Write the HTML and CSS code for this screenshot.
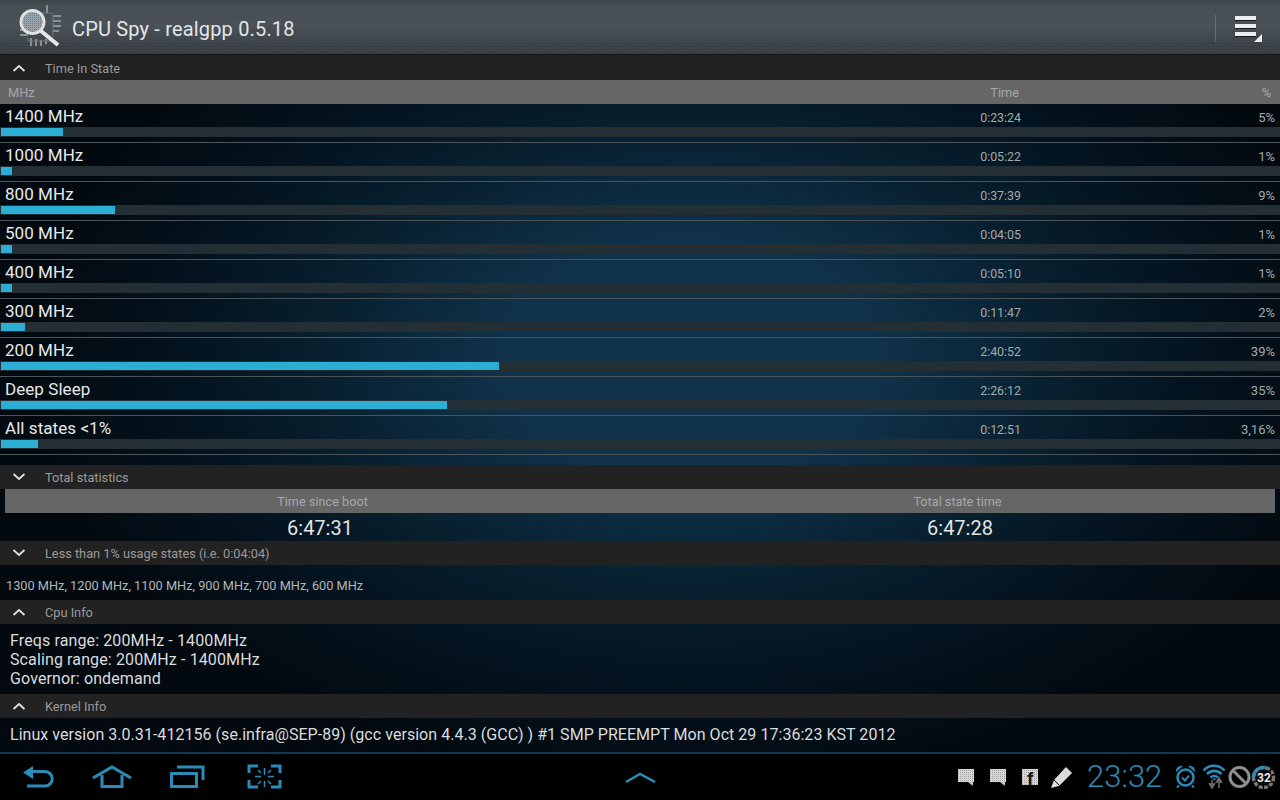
FILE: index.html
```html
<!DOCTYPE html>
<html lang="en">
<head>
<meta charset="utf-8">
<title>CPU Spy</title>
<link rel="stylesheet" href="styles.css">
</head>
<body>
<div class="screen">
  <header class="actionbar">
    <svg class="logo" viewBox="16 4 50 48" width="50" height="48">
      <defs>
        <pattern id="lensdots" width="2" height="2" patternUnits="userSpaceOnUse"><rect class="dot-a" width="2" height="2"/><rect class="dot-b" width="1" height="1"/></pattern>
      </defs>
      <g class="pins">
        <path d="M20 31h8M20 36h8M53 17h8M53 22h8M53 27h8M53 32h6"/>
        <path d="M31 39v8M36 40v7M41 41v6M46 40v5M47 6v8"/>
      </g>
      <path class="chip" d="M28 14h22a3 3 0 0 1 3 3v21M28 39v3h22"/>
      <circle class="lens-dots" cx="32.500" cy="23" r="10"/>
      <path class="lens-blue" d="M26 17h1M29 15h1M32 16h1M35 15h1M38 18h1M28 20h1M31 19h1M34 20h1M37 21h1"/>
      <circle class="lens" cx="32.500" cy="23" r="11.500"/>
      <path class="handle" d="M41 32l17 14"/>
    </svg>
    <h1 class="title">CPU Spy - realgpp 0.5.18</h1>
    <div class="divider"></div>
    <svg class="menu" viewBox="1216 0 64 55" width="64" height="55">
      <path class="menu-shadow" d="M1235 20h21v1h-21zM1235 28h21v1h-21zM1235 36h21v1h-21z"/>
      <path class="menu-bars" d="M1235 16h21v4h-21zM1235 24h21v4h-21zM1235 32h21v4h-21zM1262 34v8h-8z"/>
    </svg>
  </header>

  <div class="section section-first"><svg class="chev" viewBox="0 0 14 8" width="14" height="8"><path d="M1.500 7l5.500-5 5.500 5"/></svg><span>Time In State</span></div>
  <div class="thead"><span>MHz</span><span>Time</span><span>%</span></div>

  <div class="row"><div class="cells"><span class="name">1400 MHz</span><span class="val">0:23:24</span><span class="pct">5%</span></div><div class="track"><div class="fill" style="width:62px"></div></div></div>
  <div class="row"><div class="cells"><span class="name">1000 MHz</span><span class="val">0:05:22</span><span class="pct">1%</span></div><div class="track"><div class="fill" style="width:11px"></div></div></div>
  <div class="row"><div class="cells"><span class="name">800 MHz</span><span class="val">0:37:39</span><span class="pct">9%</span></div><div class="track"><div class="fill" style="width:114px"></div></div></div>
  <div class="row"><div class="cells"><span class="name">500 MHz</span><span class="val">0:04:05</span><span class="pct">1%</span></div><div class="track"><div class="fill" style="width:11px"></div></div></div>
  <div class="row"><div class="cells"><span class="name">400 MHz</span><span class="val">0:05:10</span><span class="pct">1%</span></div><div class="track"><div class="fill" style="width:11px"></div></div></div>
  <div class="row"><div class="cells"><span class="name">300 MHz</span><span class="val">0:11:47</span><span class="pct">2%</span></div><div class="track"><div class="fill" style="width:24px"></div></div></div>
  <div class="row"><div class="cells"><span class="name">200 MHz</span><span class="val">2:40:52</span><span class="pct">39%</span></div><div class="track"><div class="fill" style="width:498px"></div></div></div>
  <div class="row"><div class="cells"><span class="name">Deep Sleep</span><span class="val">2:26:12</span><span class="pct">35%</span></div><div class="track"><div class="fill" style="width:446px"></div></div></div>
  <div class="row"><div class="cells"><span class="name">All states &lt;1%</span><span class="val">0:12:51</span><span class="pct">3,16%</span></div><div class="track"><div class="fill" style="width:37px"></div></div></div>

  <div class="section section-gap"><svg class="chev" viewBox="0 0 14 8" width="14" height="8"><path d="M1.500 1l5.500 5 5.500-5"/></svg><span>Total statistics</span></div>
  <div class="totals-head"><span>Time since boot</span><span>Total state time</span></div>
  <div class="totals"><span>6:47:31</span><span>6:47:28</span></div>

  <div class="section"><svg class="chev" viewBox="0 0 14 8" width="14" height="8"><path d="M1.500 1l5.500 5 5.500-5"/></svg><span>Less than 1% usage states (i.e. 0:04:04)</span></div>
  <p class="low">1300 MHz, 1200 MHz, 1100 MHz, 900 MHz, 700 MHz, 600 MHz</p>

  <div class="section"><svg class="chev" viewBox="0 0 14 8" width="14" height="8"><path d="M1.500 7l5.500-5 5.500 5"/></svg><span>Cpu Info</span></div>
  <div class="info"><p>Freqs range: 200MHz - 1400MHz</p><p>Scaling range: 200MHz - 1400MHz</p><p>Governor: ondemand</p></div>

  <div class="section"><svg class="chev" viewBox="0 0 14 8" width="14" height="8"><path d="M1.500 7l5.500-5 5.500 5"/></svg><span>Kernel Info</span></div>
  <div class="kernel"><p>Linux version 3.0.31-412156 (se.infra@SEP-89) (gcc version 4.4.3 (GCC) ) #1 SMP PREEMPT Mon Oct 29 17:36:23 KST 2012</p></div>

  <nav class="navbar">
    <div class="nav-left">
      <svg viewBox="0 753 76 47" width="76" height="47"><path class="blue-fill" d="M23 772.500l10-6.500v13z"/><path class="blue-line" d="M32 771.500h13a7 7 0 0 1 0 14.500h-18"/></svg>
      <svg viewBox="76 753 76 47" width="76" height="47"><path class="blue-line" d="M93 778l19-11 19 11M102 775v11.500h20v-11.500"/></svg>
      <svg viewBox="152 753 76 47" width="76" height="47"><path class="blue-line" d="M177 767h26v13"/><rect class="blue-line" x="171.500" y="773.500" width="25" height="13"/></svg>
      <svg viewBox="228 753 76 47" width="76" height="47"><path class="blue-line" d="M258 766h-9v7M271 766h9v7M249 780v7h9M280 780v7h-9"/><path class="blue-thin" d="M264.500 768v7M264.500 781v6M255 776.500h6M268 776.500h6M258 770l3 3M271 770l-3 3M258 784l3-3M271 784l-3-3"/></svg>
    </div>
    <svg class="nav-up" viewBox="625 765 31 20" width="31" height="20"><path class="blue-up" d="M626 780l14-8 15 8"/></svg>
    <div class="nav-right">
      <svg viewBox="950 753 130 47" width="130" height="47">
        <defs>
          <pattern id="dither" width="2" height="2" patternUnits="userSpaceOnUse"><rect class="dot-c" width="2" height="2"/><rect class="dot-d" width="1" height="1"/></pattern>
        </defs>
        <path class="note" d="M958 769h16v13h-1v4l-5-4h-10z"/>
        <path class="note" d="M990 769h16v13h-1v4l-5-4h-10z"/>
        <rect class="note" x="1022" y="769" width="16" height="16"/>
        <text class="fb" x="1027" y="785">f</text>
        <path class="pencil" d="M1066 767l6 6-13 13-8 2 3-8z"/>
        <path class="pencil-cut" d="M1053.500 779.500l6 6"/>
      </svg>
      <span class="clock">23:32</span>
      <svg viewBox="1170 753 110 47" width="110" height="47">
        <circle class="alarm" cx="1185.500" cy="777.500" r="8"/>
        <path class="blue-line-2" d="M1182 777.500l3 3 4-5M1179 785.500l-2 2M1192 785.500l2 2"/>
        <path class="blue-fill" d="M1176 772a5.500 5.500 0 0 1 7-6zM1195 772a5.500 5.500 0 0 0-7-6z"/>
        <path class="wifi" d="M1203.500 770.500a14 14 0 0 1 21 0M1207 774a10 10 0 0 1 14.500 0M1210.500 777.500a5.500 5.500 0 0 1 7.500 0"/>
        <path class="blue-fill" d="M1212 778.500h4.500l-2.200 2z"/>
        <path class="arrows" d="M1212 780v6M1219 781v7M1209.500 784l2.500 4 2.500-4zM1216.500 782l2.500-4 2.500 4z"/>
        <circle class="nosign" cx="1239.500" cy="777" r="9.500"/>
        <path class="nosign" d="M1233 770.500l13 13"/>
        <circle class="bat-grey" cx="1263.500" cy="777.500" r="10"/>
        <path class="bat-blue" d="M1253.500 777.500a10 10 0 0 1 13-9.500"/>
        <rect class="bat-box" x="1257" y="772" width="14" height="11"/>
        <text class="bat-text" x="1264" y="782">32</text>
      </svg>
    </div>
  </nav>
</div>
</body>
</html>
```
FILE: styles.css
```css
* { box-sizing: border-box; }
html, body { margin: 0; padding: 0; }
body { width: 1280px; height: 800px; overflow: hidden; background: #000; }
p, h1 { margin: 0; font-weight: 400; }

.screen {
  width: 1280px;
  height: 800px;
  display: flex;
  flex-direction: column;
  font-family: Roboto, "Liberation Sans", sans-serif;
  background-color: #020a10;
  background-image: radial-gradient(ellipse 660px 420px at 690px 360px, #10324a 0, #10324a 28%, #0c2a3f 40%, #08202f 55%, #041420 75%, #020a10 100%);
}

.actionbar {
  height: 55px;
  flex: none;
  display: flex;
  align-items: center;
  border-bottom: 1px solid #111517;
  background-color: #40484d;
  background-image:
    radial-gradient(circle, rgba(20,26,30,.45) 0.7px, transparent 1px),
    radial-gradient(circle, rgba(20,26,30,.45) 0.7px, transparent 1px),
    radial-gradient(circle, rgba(20,26,30,.45) 0.7px, transparent 1px),
    radial-gradient(circle, rgba(20,26,30,.45) 0.7px, transparent 1px),
    linear-gradient(#3d454a 0, #464e53 12%, #4a5257 45%, #3f474c 75%, #3a4247 100%);
  background-size: 3px 3px, 3px 3px, 3px 3px, 3px 3px, 100% 100%;
  background-position: 0 42px, 1px 45px, 0 48px, 1px 51px, 0 0;
  background-repeat: repeat-x, repeat-x, repeat-x, repeat-x, no-repeat;
}
.logo { margin-left: 16px; flex: none; }
.lens { fill: none; stroke: #dfe1e1; stroke-width: 3; }
.lens-dots { fill: url(#lensdots); }
.dot-a { fill: #9aa4a8; }
.dot-b { fill: #6f7c82; }
.lens-blue { fill: none; stroke: #3fb4d8; stroke-width: 1; }
.handle { fill: none; stroke: #e8e8e8; stroke-width: 4; }
.pins path { fill: none; stroke: #8b9294; stroke-width: 2; }
.chip { fill: none; stroke: #70787c; stroke-width: 1; }
.title {
  margin-left: 6px;
  padding-top: 4px;
  flex: 1;
  font-size: 20px;
  letter-spacing: .17px;
  line-height: 28px;
  color: #e4e6e7;
}
.divider { width: 1px; height: 26px; margin-top: 2px; background: #697074; flex: none; }
.menu { flex: none; }
.menu-bars { fill: #eceded; }
.menu-shadow { fill: #15191c; }

.section {
  height: 24px;
  flex: none;
  display: flex;
  align-items: center;
  background: #222;
  color: #9b9b9b;
  font-size: 12.750px;
}
.chev { margin-left: 12px; margin-right: 19px; flex: none; }
.chev path { fill: none; stroke: #e0e0e0; stroke-width: 1.800; }
.section-first { height: 25px; padding-top: 1px; }
.section-gap { margin-top: 10px; }

.thead {
  height: 24px;
  flex: none;
  display: grid;
  grid-template-columns: 1fr 120px 252px;
  align-items: center;
  padding: 1px 9px 0 8px;
  background: #666;
  color: #a8a8a8;
  font-size: 12.750px;
}
.thead span + span { text-align: right; }

.row {
  height: 39px;
  flex: none;
  border-bottom: 1px solid #4b5459;
}
.cells {
  height: 23px;
  display: grid;
  grid-template-columns: 1fr 120px 254px;
  align-items: center;
  padding: 1px 5px 0;
}
.name { font-size: 17px; letter-spacing: .06px; color: #e8e8e8; }
.val { font-size: 12.400px; color: #a6a9aa; text-align: right; padding-top: 3px; }
.pct { font-size: 13px; color: #a6a9aa; text-align: right; padding-top: 3px; }
.track {
  height: 10px;
  padding: 1px;
  background: #232e35;
}
.fill { height: 8px; background: #2cadd3; }

.totals-head {
  margin: 0 5px;
  height: 24px;
  flex: none;
  display: grid;
  grid-template-columns: 1fr 1fr;
  align-items: center;
  padding-top: 1px;
  background: #666;
  color: #a8a8a8;
  font-size: 12.700px;
  text-align: center;
}
.totals {
  height: 28px;
  flex: none;
  display: grid;
  grid-template-columns: 1fr 1fr;
  align-items: center;
  padding-top: 2px;
  color: #e4e4e4;
  font-size: 20px;
  text-align: center;
}
.low {
  height: 35px;
  flex: none;
  padding: 14px 0 0 6px;
  font-size: 12.750px;
  line-height: 14px;
  color: #b4b6b7;
}
.info {
  height: 70px;
  flex: none;
  padding: 7px 0 0 10px;
  font-size: 16px;
  letter-spacing: .12px;
  line-height: 19px;
  color: #dcdcdc;
}
.kernel {
  height: 35px;
  flex: none;
  padding: 7px 0 0 10px;
  font-size: 16px;
  letter-spacing: .04px;
  line-height: 19px;
  color: #dcdcdc;
  border-bottom: 1px solid #0f3a50;
}

.navbar {
  height: 47px;
  flex: none;
  display: grid;
  grid-template-columns: 1fr auto 1fr;
  align-items: center;
  background: #000;
  box-shadow: inset 0 1px #0f3a50;
}
.navbar svg { display: block; }
.nav-left, .nav-right { display: flex; align-items: center; }
.nav-right { justify-content: flex-end; }
.clock {
  width: 83px;
  margin-left: 7px;
  font-size: 31px;
  font-weight: 300;
  color: #2a8cb8;
}
.blue-line { fill: none; stroke: #2a8cb8; stroke-width: 3; }
.blue-line-2 { fill: none; stroke: #2a8cb8; stroke-width: 2; }
.blue-thin { fill: none; stroke: #2a8cb8; stroke-width: 1.500; }
.blue-up { fill: none; stroke: #2a8cb8; stroke-width: 2.500; }
.blue-fill { fill: #2a8cb8; }
.alarm { fill: none; stroke: #2a8cb8; stroke-width: 2.500; }
.note { fill: url(#dither); }
.dot-c { fill: #d6d6d6; }
.dot-d { fill: #a8a8a8; }
.pencil { fill: #dcdcdc; }
.pencil-cut { fill: none; stroke: #000; stroke-width: 1; }
.fb { font-family: "Liberation Sans", sans-serif; font-weight: 700; font-size: 19px; fill: #161616; }
.wifi { fill: none; stroke: #2a8cb8; stroke-width: 2.600; }
.arrows { fill: #6a6a6a; stroke: #6a6a6a; stroke-width: 1.500; }
.nosign { fill: none; stroke: #8f8f8f; stroke-width: 3; }
.bat-grey { fill: none; stroke: #777; stroke-width: 3.500; stroke-dasharray: 4 1.500; }
.bat-blue { fill: none; stroke: #2a8cb8; stroke-width: 3.500; stroke-dasharray: 4 1.500; }
.bat-box { fill: #000; }
.bat-text { font-size: 12px; font-weight: 700; fill: #eee; text-anchor: middle; }
```
